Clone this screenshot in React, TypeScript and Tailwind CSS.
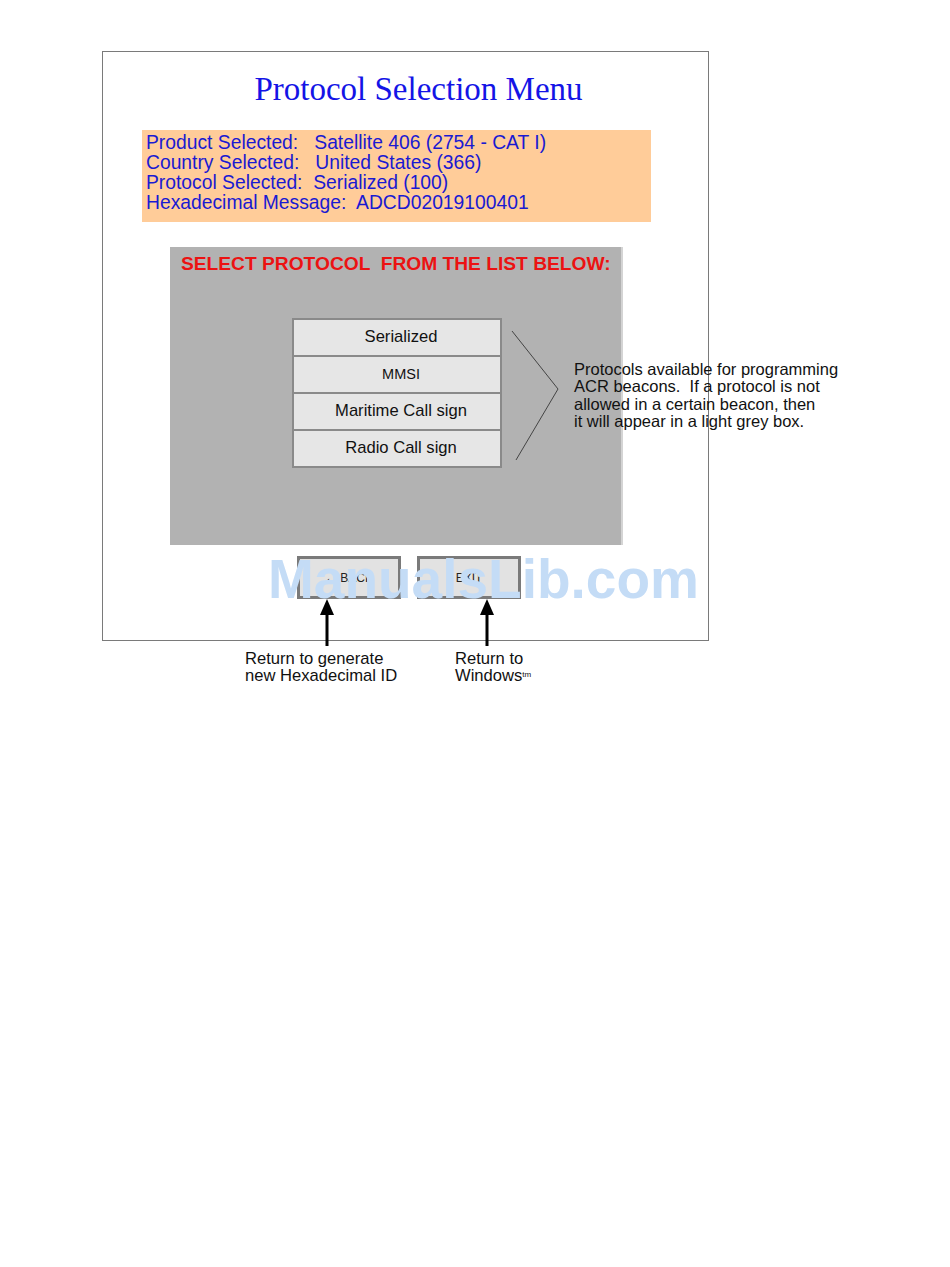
import React from 'react';

const infoLines = [
  'Product Selected:   Satellite 406 (2754 - CAT I)',
  'Country Selected:   United States (366)',
  'Protocol Selected:  Serialized (100)',
  'Hexadecimal Message:  ADCD02019100401',
];

const protocols = ['Serialized', 'MMSI', 'Maritime Call sign', 'Radio Call sign'];

const UpArrow = ({ left }: { left: number }) => (
  <svg
    className="absolute top-[599px]"
    style={{ left }}
    width="16"
    height="47"
    viewBox="0 0 16 47"
  >
    <polygon points="8,0 15,16 1,16" fill="#000" />
    <rect x="6.5" y="14" width="3" height="33" fill="#000" />
  </svg>
);

const App: React.FC = () => {
  return (
    <div className="relative min-h-[1267px] w-[950px] bg-white pl-[102px] pt-[51px] font-['Liberation_Sans',Arial,sans-serif]">
      <div className="flex w-[607px] flex-col border border-[#7a7a7a] pb-[41px]">
        <h1 className="mt-[19px] pl-[26px] text-center font-['Liberation_Serif','Times_New_Roman',serif] text-[33px] leading-[36px] text-[#1414e6]">
          Protocol Selection Menu
        </h1>

        <div className="ml-[39px] mt-[23px] w-[509px] bg-[#ffcc99] pb-[9px] pl-[4px] pt-[3px]">
          {infoLines.map(line => (
            <div key={line} className="whitespace-pre text-[19.3px] leading-[20px] text-[#1a1ad2]">
              {line}
            </div>
          ))}
        </div>

        <div className="ml-[67px] mt-[25px] h-[298px] w-[453px] border-r-2 border-[#d4d4d4] bg-[#b2b2b2] pl-[11px] pt-[7px]">
          <div className="whitespace-pre text-[19.2px] font-bold leading-[20px] text-[#ec1212]">
            SELECT PROTOCOL  FROM THE LIST BELOW:
          </div>

          <div className="ml-[111px] mt-[44px] flex items-start">
            <div className="w-[210px] shrink-0 border-[2px] border-[#8a8a8a] bg-[#8a8a8a]">
              {protocols.map((p, i) => (
                <div
                  key={p}
                  className={`flex h-[35px] items-center justify-center bg-[#e6e6e6] pl-[8px] text-[#111] ${i > 0 ? 'mt-[2px]' : ''} ${p === 'MMSI' ? 'text-[14.5px]' : 'text-[16.6px]'}`}
                >
                  {p}
                </div>
              ))}
            </div>
            <svg className="ml-[8px] shrink-0" width="50" height="146" viewBox="0 0 50 146">
              <polyline points="2,13 48,71 6,142" fill="none" stroke="#444" strokeWidth="1" />
            </svg>
            <div className="ml-[14px] mt-[43px] shrink-0 whitespace-nowrap text-[16.5px] leading-[17.4px] text-[#111]">
              Protocols available for programming
              <br />
              ACR beacons.&nbsp; If a protocol is not
              <br />
              allowed in a certain beacon, then
              <br />
              it will appear in a light grey box.
            </div>
          </div>
        </div>

        <div className="ml-[194px] mt-[11px] flex gap-[16px]">
          <div className="flex h-[43px] w-[104px] items-center justify-center border-[3px] border-[#7a7a7a] bg-[#e2e2e2] text-[12px] text-[#222]">
            ← BACK
          </div>
          <div className="flex h-[43px] w-[104px] items-center justify-center border-[3px] border-[#7a7a7a] bg-[#e2e2e2] text-[12px] text-[#222]">
            EXIT
          </div>
        </div>
      </div>

      <div className="mt-[9px] flex text-[16.6px] leading-[17px] text-[#111]">
        <div className="ml-[143px] w-[210px]">
          Return to generate
          <br />
          new Hexadecimal ID
        </div>
        <div>
          Return to
          <br />
          Windows<sup className="text-[8px]">tm</sup>
        </div>
      </div>

      <UpArrow left={319} />
      <UpArrow left={479} />

      <div className="absolute left-[268px] top-[547px] whitespace-nowrap text-[55px] font-bold leading-[64px] text-[#c4dcf6]">
        ManualsLib.com
      </div>
    </div>
  );
};

export default App;
